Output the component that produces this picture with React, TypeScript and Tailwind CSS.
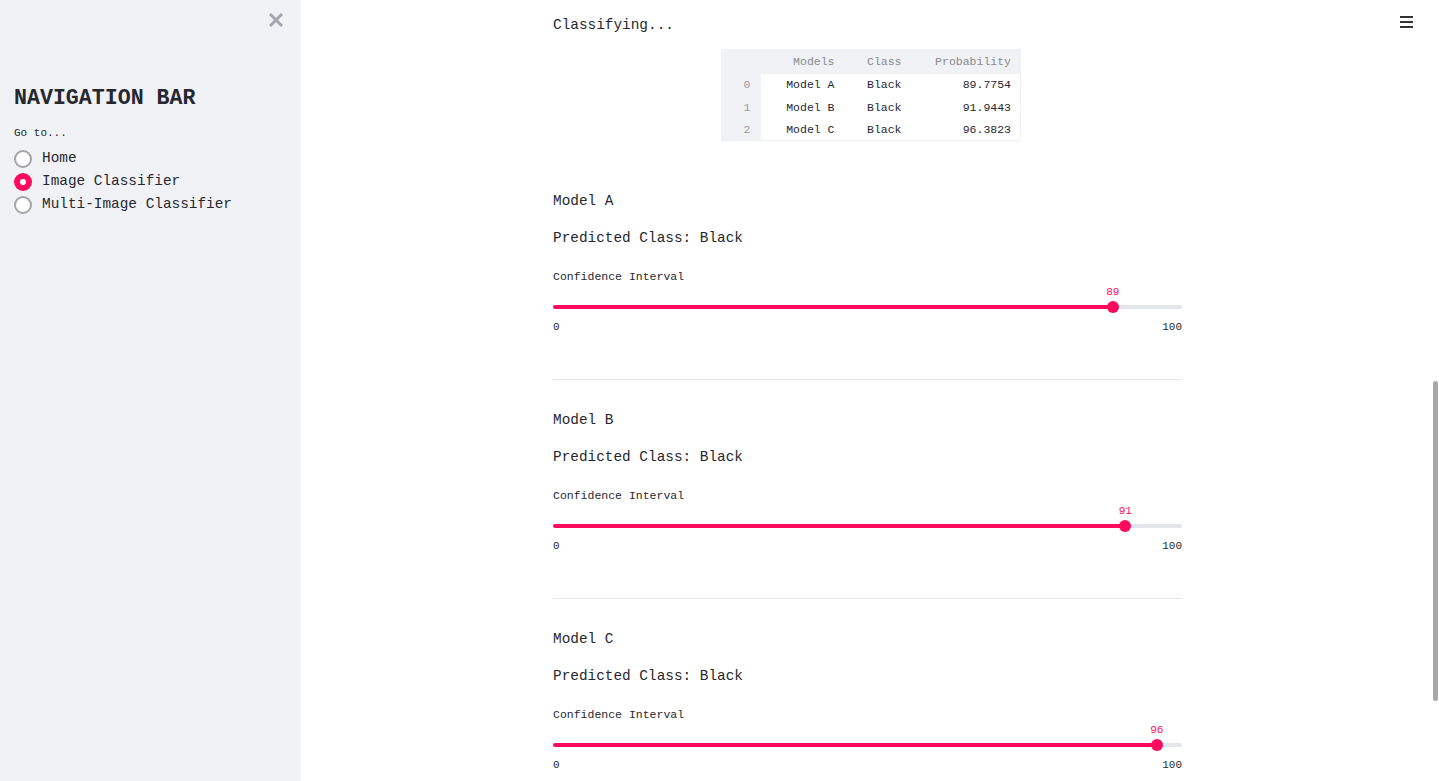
import { useState } from "react";

type ModelResult = {
  name: string;
  predicted: string;
  probability: string;
  confidence: number;
};

const results: ModelResult[] = [
  { name: "Model A", predicted: "Black", probability: "89.7754", confidence: 89 },
  { name: "Model B", predicted: "Black", probability: "91.9443", confidence: 91 },
  { name: "Model C", predicted: "Black", probability: "96.3823", confidence: 96 },
];

const pages = ["Home", "Image Classifier", "Multi-Image Classifier"];

const mono = { fontFamily: '"Liberation Mono", "DejaVu Sans Mono", monospace' };

function Radio({ label, checked, onSelect }: { label: string; checked: boolean; onSelect: () => void }) {
  return (
    <button onClick={onSelect} className="flex h-[23px] items-center gap-[10px] text-left">
      {checked ? (
        <span className="grid h-[18px] w-[18px] place-items-center rounded-full bg-[#ff0a5c]">
          <span className="h-[6px] w-[6px] rounded-full bg-white" />
        </span>
      ) : (
        <span className="h-[18px] w-[18px] rounded-full border-2 border-[#a3a3a8] bg-white" />
      )}
      <span className="text-[14.4px] text-[#262730]">{label}</span>
    </button>
  );
}

function Slider({ value }: { value: number }) {
  return (
    <div>
      <div className="relative h-[14px] text-[11px] leading-[14px] text-[#ff0a5c]">
        <span className="absolute -translate-x-1/2" style={{ left: `${value}%` }}>
          {value}
        </span>
      </div>
      <div className="relative h-4">
        <div className="absolute top-[6px] h-1 w-full rounded-full bg-[#e3e5ec]" />
        <div
          className="absolute top-[6px] h-1 rounded-full bg-[#ff0a5c]"
          style={{ width: `${value}%` }}
        />
        <div
          className="absolute top-[2px] h-3 w-3 -translate-x-1/2 rounded-full bg-[#ff0a5c]"
          style={{ left: `${value}%` }}
        />
      </div>
      <div className="mt-[5px] flex justify-between text-[11px] leading-[14px] text-[#262730]">
        <span>0</span>
        <span>100</span>
      </div>
    </div>
  );
}

function ResultsTable() {
  return (
    <table className="ml-[168px] border border-[#eef0f4] text-[11.5px] text-[#262730]" style={{ borderCollapse: "collapse" }}>
      <thead>
        <tr className="h-[24px] bg-[#f0f2f6] text-[#8a8a8f]">
          <th className="w-[39px]" />
          <th className="w-[83px] pr-[9px] text-right font-normal">Models</th>
          <th className="w-[67px] pr-[9px] text-right font-normal">Class</th>
          <th className="w-[110px] pr-[9px] text-right font-normal">Probability</th>
        </tr>
      </thead>
      <tbody>
        {results.map((r, i) => (
          <tr key={r.name} className={i === 0 ? "h-[23px]" : "h-[22px]"}>
            <td className="bg-[#f0f2f6] pr-[10px] text-right text-[#9a9aa0]">{i}</td>
            <td className="pr-[9px] text-right">{r.name}</td>
            <td className="pr-[9px] text-right">{r.predicted}</td>
            <td className="pr-[9px] text-right">{r.probability}</td>
          </tr>
        ))}
      </tbody>
    </table>
  );
}

export default function App() {
  const [page, setPage] = useState("Image Classifier");

  return (
    <div className="relative flex h-[781px] w-full overflow-hidden bg-white text-[#262730]" style={mono}>
      <aside className="h-full w-[301px] shrink-0 bg-[#f0f2f6] px-[14px]">
        <div className="flex justify-end pt-[13px] pr-[4px]">
          <svg width="14" height="14" viewBox="0 0 14 14" className="text-[#a3a6ad]">
            <path d="M2 2L12 12M12 2L2 12" stroke="currentColor" strokeWidth="3" strokeLinecap="square" />
          </svg>
        </div>
        <h2 className="mt-[58px] text-[21.6px] font-bold leading-[26px] text-[#262730]">NAVIGATION BAR</h2>
        <div className="mt-[15px] text-[11px] leading-[14px]">Go to...</div>
        <div className="mt-[7px] flex flex-col">
          {pages.map((p) => (
            <Radio key={p} label={p} checked={page === p} onSelect={() => setPage(p)} />
          ))}
        </div>
      </aside>

      <main className="flex-1 pl-[252px]">
        <div className="w-[629px]">
          <p className="mt-[13px] text-[14.4px] leading-[24px]">Classifying...</p>
          <div className="mt-[12px]">
            <ResultsTable />
          </div>
          <div className="mt-[48px]">
            {results.map((r, i) => (
              <section key={r.name}>
                {i > 0 && <hr className="mt-[45px] mb-[28px] border-t border-[#e6e6ea]" />}
                <p className="text-[14.4px] leading-[24px]">{r.name}</p>
                <p className="mt-[13px] text-[14.4px] leading-[24px]">Predicted Class: {r.predicted}</p>
                <p className="mt-[19px] text-[11.5px] leading-[16px]">Confidence Interval</p>
                <Slider value={r.confidence} />
              </section>
            ))}
          </div>
        </div>
      </main>

      <div className="absolute top-[16px] right-[26px] flex w-[13px] flex-col gap-[3.5px]">
        <span className="h-[1.5px] bg-[#333]" />
        <span className="h-[1.5px] bg-[#333]" />
        <span className="h-[1.5px] bg-[#333]" />
      </div>

      <div className="absolute top-[381px] right-[1px] h-[320px] w-[5px] rounded-full bg-[#a8a8a8]" />
    </div>
  );
}
